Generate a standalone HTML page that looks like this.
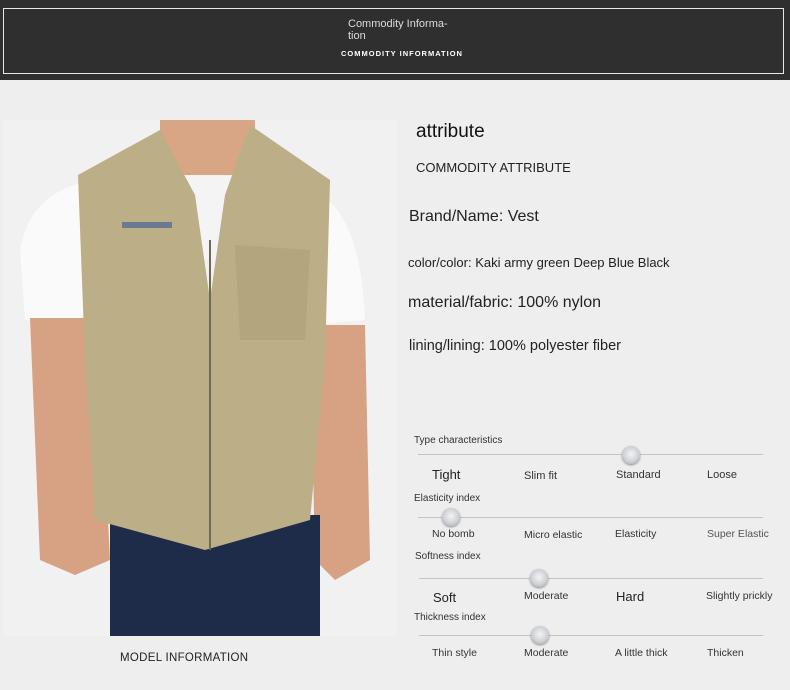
<!DOCTYPE html>
<html><head><style>
*{margin:0;padding:0}
body{width:790px;height:690px;background:#eeeeee;position:relative;overflow:hidden;font-family:"Liberation Sans",sans-serif;color:#222}
.t{position:absolute;white-space:nowrap}
.hd{position:absolute;left:0;top:0;width:790px;height:80px;background:#2f2f2f}
.bx{position:absolute;left:3px;top:8px;width:779px;height:64px;border:1px solid #e8e8e8}
.ln{position:absolute;height:1px;background:#c4c4c4}
.k{position:absolute;width:18px;height:18px;border-radius:50%;background:radial-gradient(circle at 50% 45%,#f4f4f4 0,#cfd2d6 55%,#9da3aa 100%);box-shadow:0 1px 2px #888}
.s{font-size:11px;color:#333}
</style></head><body>
<div class="hd"><div class="bx"></div>
<div class="t" style="left:348px;top:18px;font-size:11px;color:#ddd;line-height:12px">Commodity Informa-<br>tion</div>
<div class="t" style="left:341px;top:49px;font-size:7.5px;color:#fff;font-weight:bold;letter-spacing:1px">COMMODITY INFORMATION</div>
</div>
<svg style="position:absolute;left:3px;top:120px" width="394" height="516" viewBox="3 120 394 516">
<rect x="3" y="120" width="394" height="516" fill="#f1f1f1"/>
<path d="M160 120 L255 120 L255 190 L160 190Z" fill="#d8a585"/>
<path d="M20 250 Q30 190 95 180 L100 320 L25 320Z" fill="#fafafa"/>
<path d="M305 190 Q360 200 365 320 L305 325Z" fill="#fafafa"/>
<path d="M30 318 L98 318 L110 560 L75 575 L40 560Z" fill="#d6a283"/>
<path d="M310 325 L365 325 L370 560 L335 580 L315 560Z" fill="#d6a283"/>
<rect x="110" y="515" width="210" height="121" fill="#1f2c49"/>
<path d="M175 175 L245 175 L240 260 L180 260Z" fill="#f4f4f4"/>
<path d="M78 175 L160 130 L195 195 L210 300 L225 195 L250 125 L330 180 L325 360 L310 520 L205 550 L95 520 L85 360Z" fill="#bcae86"/>
<line x1="210" y1="240" x2="210" y2="550" stroke="#6f6a58" stroke-width="2"/>
<path d="M235 245 L310 250 L305 340 L240 340Z" fill="#b3a57e"/>
<rect x="122" y="222" width="50" height="6" fill="#6a7a90"/>
</svg>
<div class="t" style="left:120px;top:652px;font-size:11.5px;color:#222;letter-spacing:.3px">MODEL INFORMATION</div>

<div class="t" style="left:416px;top:121px;font-size:19px;color:#111">attribute</div>
<div class="t" style="left:416px;top:160px;font-size:13px;color:#222">COMMODITY ATTRIBUTE</div>
<div class="t" style="left:409px;top:208px;font-size:16px">Brand/Name: Vest</div>
<div class="t" style="left:408px;top:255px;font-size:13px">color/color: Kaki army green Deep Blue Black</div>
<div class="t" style="left:408px;top:294px;font-size:16px">material/fabric: 100% nylon</div>
<div class="t" style="left:409px;top:338px;font-size:14.5px">lining/lining: 100% polyester fiber</div>

<div class="t" style="left:414px;top:435px;font-size:10px;color:#333">Type characteristics</div>
<div class="ln" style="left:418px;top:454px;width:345px"></div>
<div class="k" style="left:622px;top:446px"></div>
<div class="t" style="left:432px;top:467px;font-size:13px">Tight</div>
<div class="t s" style="left:524px;top:470px">Slim fit</div>
<div class="t s" style="left:616px;top:469px">Standard</div>
<div class="t s" style="left:707px;top:469px">Loose</div>

<div class="t" style="left:414px;top:493px;font-size:10px;color:#333">Elasticity index</div>
<div class="ln" style="left:418px;top:517px;width:345px"></div>
<div class="k" style="left:442px;top:508px"></div>
<div class="t s" style="left:432px;top:528px;font-size:10.5px">No bomb</div>
<div class="t s" style="left:524px;top:529px;font-size:10.5px">Micro elastic</div>
<div class="t s" style="left:615px;top:528px;font-size:10.5px">Elasticity</div>
<div class="t s" style="left:707px;top:528px;font-size:10.5px;color:#555">Super Elastic</div>

<div class="t" style="left:415px;top:551px;font-size:10px;color:#333">Softness index</div>
<div class="ln" style="left:419px;top:578px;width:344px"></div>
<div class="k" style="left:530px;top:569px"></div>
<div class="t" style="left:433px;top:590px;font-size:13px">Soft</div>
<div class="t s" style="left:524px;top:590px;font-size:10.5px">Moderate</div>
<div class="t" style="left:616px;top:589px;font-size:13px">Hard</div>
<div class="t s" style="left:706px;top:590px;font-size:10.5px">Slightly prickly</div>

<div class="t" style="left:414px;top:612px;font-size:10px;color:#333">Thickness index</div>
<div class="ln" style="left:419px;top:635px;width:344px"></div>
<div class="k" style="left:531px;top:626px"></div>
<div class="t s" style="left:432px;top:647px;font-size:10.5px">Thin style</div>
<div class="t s" style="left:524px;top:647px;font-size:10.5px">Moderate</div>
<div class="t s" style="left:615px;top:647px;font-size:10.5px">A little thick</div>
<div class="t s" style="left:707px;top:647px;font-size:10.5px">Thicken</div>
</body></html>
